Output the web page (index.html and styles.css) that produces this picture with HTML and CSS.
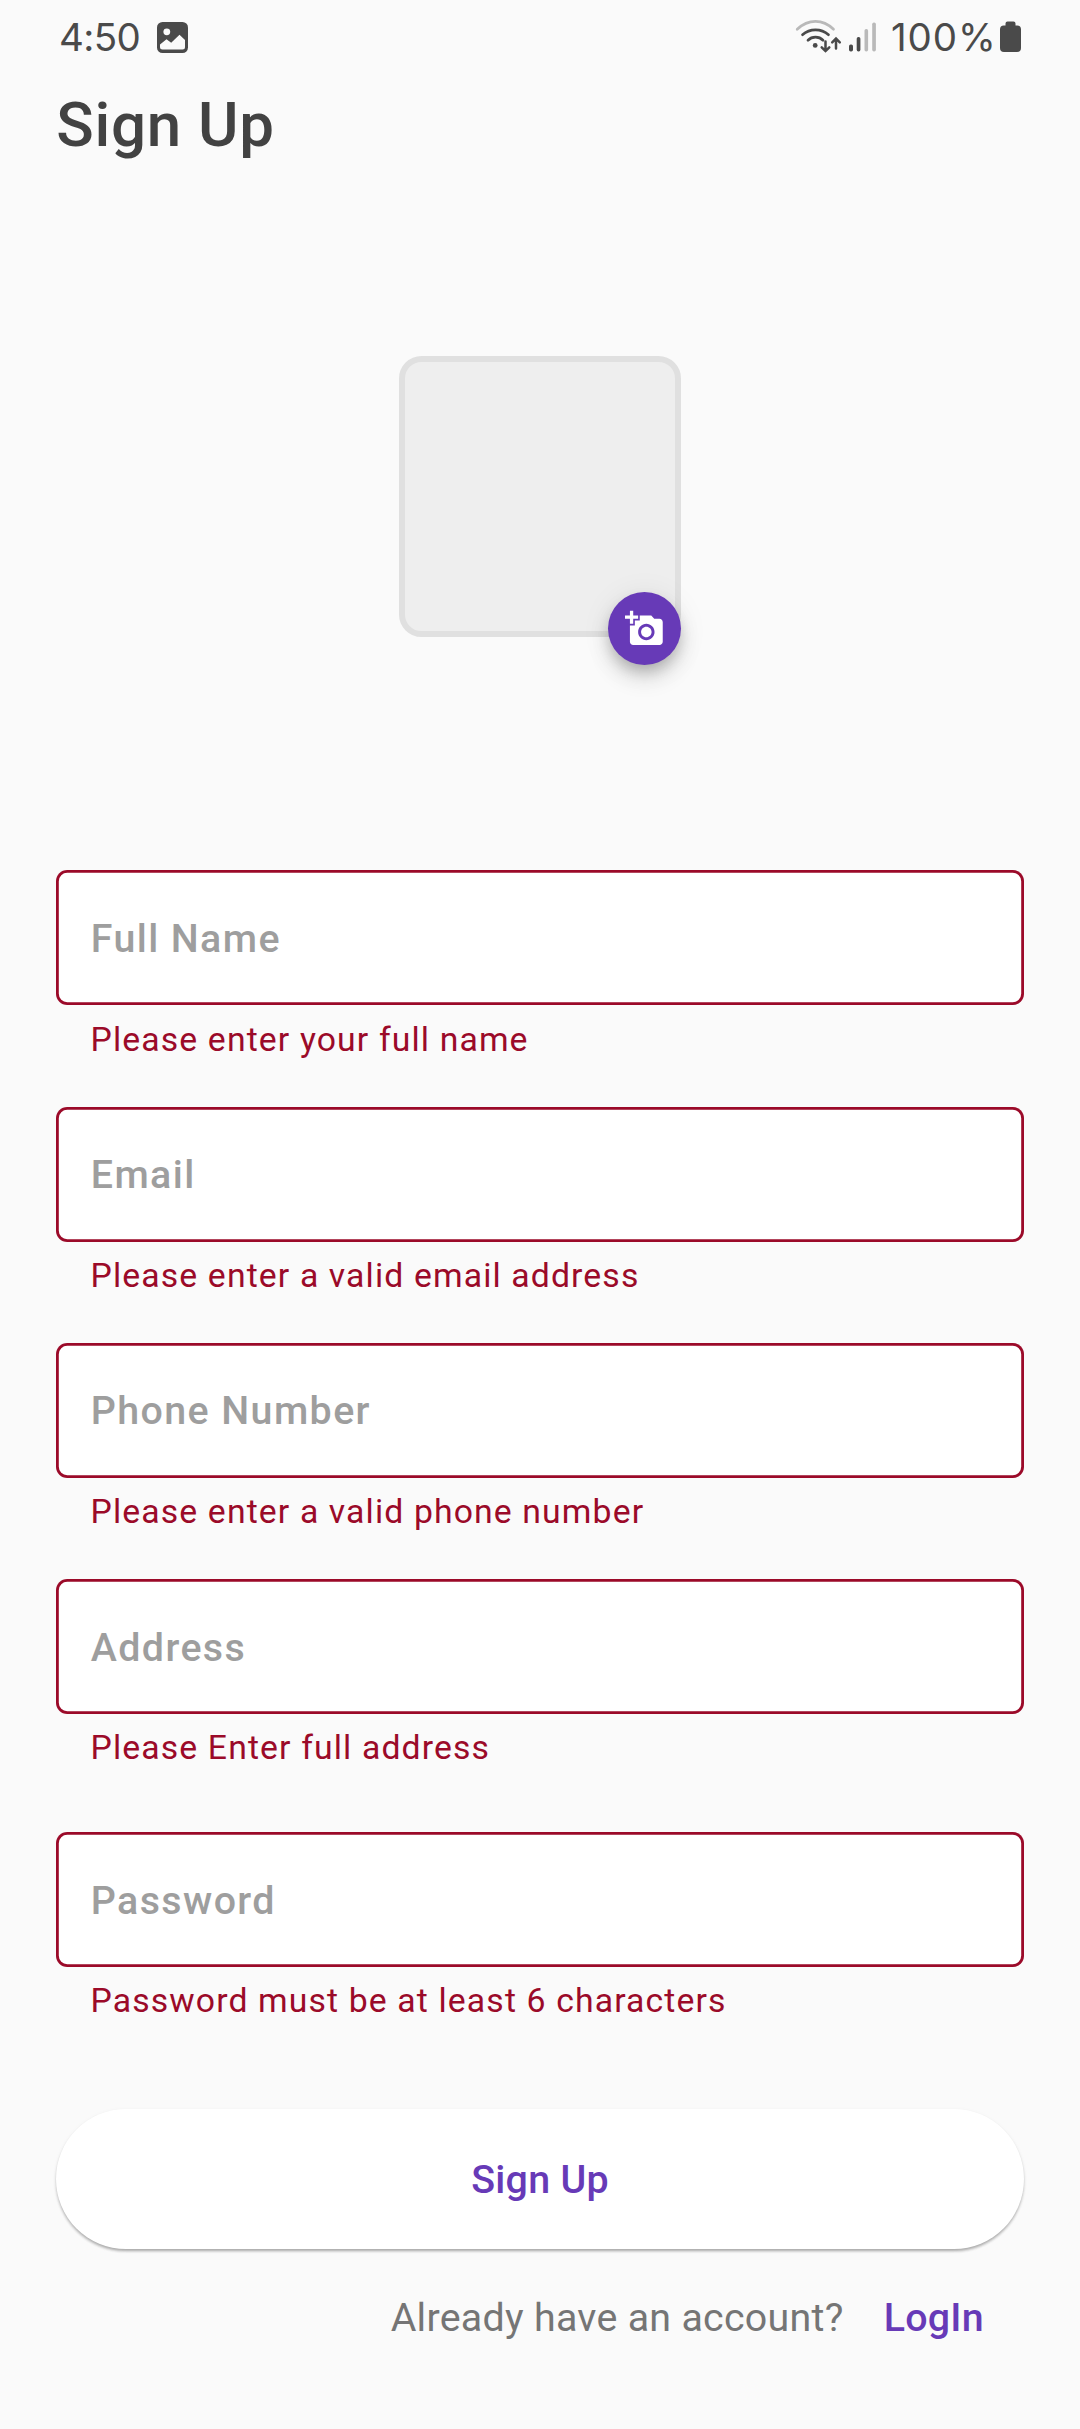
FILE: index.html
```html
<!DOCTYPE html>
<html lang="en">
<head>
<meta charset="utf-8">
<title>Sign Up</title>
<link rel="stylesheet" href="styles.css">
</head>
<body>
<div class="screen">
  <header class="status">
    <div class="status-left">
      <span class="clock">4:50</span>
      <svg class="icon-image" width="31" height="31" viewBox="0 0 31 31"><rect width="31" height="31" rx="5.5" fill="#4a4a4a"/><circle cx="9.8" cy="9.8" r="3.4" fill="#fafafa"/><path d="M3 22.500L9.500 17.200l4.700 3.600 8.300-8 5.500 5.300v6.900q0 2.500-2.500 2.500h-20q-2.500 0-2.500-2.500z" fill="#fafafa"/></svg>
    </div>
    <div class="status-right">
      <svg class="icon-wifi" width="46" height="34" viewBox="0 0 46 34" fill="none" stroke="#4a4a4a" stroke-width="2.700" stroke-linecap="round"><path d="M-.8 10.200Q7.500 2.300 17.500 2.300T35.500 10.200" stroke="#b9b9b9"/><path d="M4.500 15.700Q10 10.800 17.500 10.800T30.500 15.700"/><path d="M10 21.200Q13 18.200 17.500 18.200T25 21.200"/><circle cx="17.200" cy="26.400" r="2.400" fill="#4a4a4a" stroke="none"/><path d="M27.500 22.500V32M23.700 28.300l3.800 3.800 3.800-3.800M38 29.500V20M34.200 23.300l3.800-3.800 3.800 3.800" stroke-width="2.500"/></svg>
      <svg class="icon-signal" width="28" height="30" viewBox="0 0 28 30"><rect x="0" y="22.500" width="4" height="7" rx="1.700" fill="#4a4a4a"/><rect x="7.700" y="15" width="3.700" height="14.500" rx="1.700" fill="#4a4a4a"/><rect x="15.500" y="7" width="3.600" height="22.500" rx="1.700" fill="#b9b9b9"/><rect x="23.200" y="0.500" width="3.700" height="29" rx="1.700" fill="#b9b9b9"/></svg>
      <span class="charge">100%</span>
      <svg class="icon-battery" width="21" height="32" viewBox="0 0 21 32"><path d="M7.500 0.500h6q2 0 2 2V4.500h1.700q3.800 0 3.800 3.800V27q0 4-4 4H4q-4 0-4-4V8.300q0-3.800 3.800-3.800H5.500V2.500q0-2 2-2z" fill="#4a4a4a"/></svg>
    </div>
  </header>

  <h1 class="title">Sign Up</h1>

  <div class="avatar">
    <button class="avatar-add" aria-label="Add photo">
      <svg width="39.375" height="39.375" viewBox="0 0 24 24" fill="#fff"><path d="M3 4V1h2v3h3v2H5v3H3V6H0V4h3zm3 6V7h3V4h7l1.830 2H21c1.100 0 2 .900 2 2v12c0 1.100-.900 2-2 2H5c-1.100 0-2-.900-2-2V10h3zm7 9c2.760 0 5-2.240 5-5s-2.240-5-5-5-5 2.240-5 5 2.240 5 5 5zm-3.200-5c0 1.770 1.430 3.200 3.200 3.200s3.200-1.430 3.200-3.200-1.430-3.200-3.200-3.200-3.200 1.430-3.200 3.200z"/></svg>
    </button>
  </div>

  <form class="form">
    <div class="field"><div class="box">Full Name</div><p class="error">Please enter your full name</p></div>
    <div class="field"><div class="box">Email</div><p class="error">Please enter a valid email address</p></div>
    <div class="field"><div class="box">Phone Number</div><p class="error">Please enter a valid phone number</p></div>
    <div class="field"><div class="box">Address</div><p class="error">Please Enter full address</p></div>
    <div class="field field-password"><div class="box">Password</div><p class="error">Password must be at least 6 characters</p></div>
    <button class="submit" type="button">Sign Up</button>
  </form>

  <footer class="login"><span>Already have an account?</span><a class="login-link">LogIn</a></footer>
</div>
</body>
</html>
```
FILE: styles.css
```css
* { box-sizing: border-box; }
body { margin: 0; background: #fafafa; font-family: Roboto, sans-serif; }
.screen { width: 1080px; height: 2429px; display: flex; flex-direction: column; background: #fafafa; overflow: hidden; }

.status { display: flex; justify-content: space-between; height: 89px; padding: 0 59px 0 59px; font-family: Inter, sans-serif; font-size: 38.5px; line-height: 46px; color: #4a4a4a; }
.status-left, .status-right { display: flex; align-items: flex-start; }
.clock, .charge { margin-top: 13.500px; font-weight: 400; white-space: nowrap; }
.clock { width: 98px; letter-spacing: -.600px; }
.icon-image { margin-top: 22px; }
.icon-wifi { margin-top: 19px; overflow: visible; }
.icon-signal { margin-top: 21.500px; margin-left: 5px; }
.charge { width: 103px; margin-left: 14px; letter-spacing: .900px; }
.icon-battery { margin-top: 21px; margin-left: 6px; }
.status-right svg, .status-left svg { flex: none; }

.title { margin: 0 0 0 56.250px; font-size: 61.875px; line-height: 73px; font-weight: 500; letter-spacing: .750px; color: #424242; }

.avatar { position: relative; align-self: center; flex: none; width: 281.250px; height: 281px; margin-top: 194px; border: 6px solid #e0e0e0; border-radius: 22.500px; background: #eee; }
.avatar-add { position: absolute; right: -6.300px; bottom: -34px; width: 73.125px; height: 73.125px; padding: 0; border: 0; border-radius: 50%; background: #673ab7; display: flex; align-items: center; justify-content: center; box-shadow: 0 8px 14px -3px rgba(0,0,0,.2), 0 14px 22px rgba(0,0,0,.12), 0 3px 30px rgba(0,0,0,.08); }

.form { display: flex; flex-direction: column; margin: 233.400px 56.250px 0; }
.field { height: 236.250px; }
.field-password { margin-top: 16.875px; height: 276.500px; }
.box { display: flex; align-items: center; height: 135px; padding: 1px 0 0 34.500px; border-radius: 11.250px; background: #fff; box-shadow: inset 0 0 0 2.800px #9b0a29; font-size: 39.375px; font-weight: 500; letter-spacing: 1.406px; color: #9e9e9e; }
.error { margin: 14.200px 0 0 34.300px; font-size: 33.750px; line-height: 40px; letter-spacing: 1.125px; color: #9b0a29; white-space: nowrap; }
.submit { height: 140.600px; padding: 0; border: 0; border-radius: 71px; background: #fff; font-family: inherit; font-size: 39.375px; font-weight: 500; letter-spacing: .281px; color: #673ab7; box-shadow: 0 3px 3px -1px rgba(0,0,0,.2), 0 2px 3px rgba(0,0,0,.14), 0 1px 5px rgba(0,0,0,.04); }

.login { display: flex; justify-content: flex-end; margin-top: 46px; padding-right: 96px; font-size: 39.375px; line-height: 46px; letter-spacing: .281px; color: #757575; }
.login-link { margin-left: 40px; font-weight: 500; color: #673ab7; }
```
